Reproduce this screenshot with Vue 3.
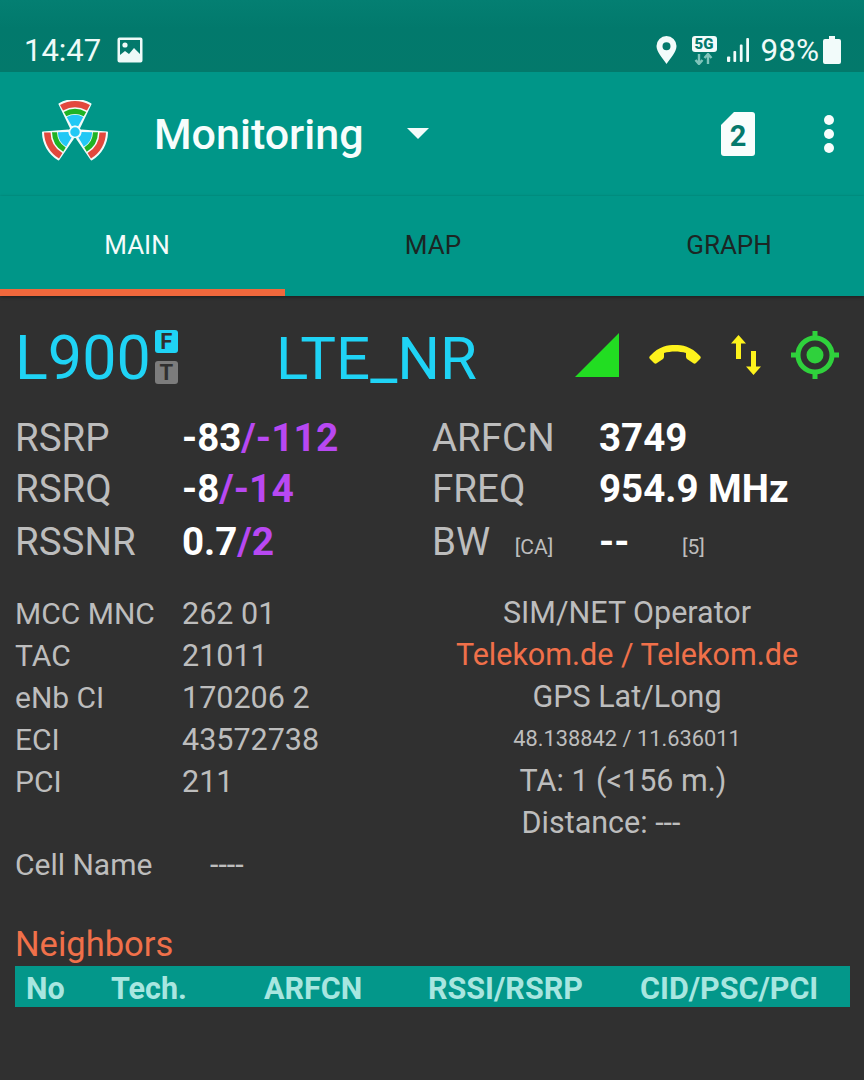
<script setup>
const signalRows = [
  { label: 'RSRP', val: '-83', lim: '/-112', label2: 'ARFCN', val2: '3749' },
  { label: 'RSRQ', val: '-8', lim: '/-14', label2: 'FREQ', val2: '954.9 MHz' },
]
const cellRows = [
  ['MCC MNC', '262 01'],
  ['TAC', '21011'],
  ['eNb CI', '170206 2'],
  ['ECI', '43572738'],
  ['PCI', '211'],
]
const bladeAngles = [0, 120, 240]
</script>

<template>
  <div class="phone">
    <div class="status">
      <div class="st-left">
        <span class="clock">14:47</span>
        <svg class="pic" width="26" height="26" viewBox="0 0 26 26">
          <path fill-rule="evenodd" d="M2.500 0.500h21a2 2 0 0 1 2 2v21a2 2 0 0 1-2 2h-21a2 2 0 0 1-2-2v-21a2 2 0 0 1 2-2zM3 3v15l5-4 4 3 5-6 6 6V3z" fill="#eefaf8" />
          <circle cx="8" cy="8" r="2.600" fill="#eefaf8" />
        </svg>
      </div>
      <div class="st-right">
        <svg width="23" height="28" viewBox="0 0 22 28"><path fill-rule="evenodd" d="M11 0a10 10 0 0 1 10 10c0 6-6 12-10 18C7 22 1 16 1 10A10 10 0 0 1 11 0zm0 6.200a4 4 0 1 0 0 8 4 4 0 0 0 0-8z" fill="#f2fbfa" /></svg>
        <div class="net">
          <span class="net-5g">5G</span>
          <svg width="22" height="12" viewBox="0 0 20 12"><path d="M5 1v9M1.500 7l3.500 4 3.500-4M14 11V2M10.500 5L14 1l3.500 4" fill="none" stroke="#7fc5bb" stroke-width="2.400" /></svg>
        </div>
        <svg class="bars" width="22" height="24" viewBox="0 0 24 26">
          <rect x="0" y="20" width="3.500" height="6" rx="1" fill="#f2fbfa" />
          <rect x="7" y="14" width="3" height="12" rx="1" fill="#f2fbfa" />
          <rect x="14" y="7" width="3" height="19" rx="1" fill="#f2fbfa" />
          <rect x="21" y="0" width="3" height="26" rx="1" fill="#f2fbfa" />
        </svg>
        <span class="pct">98%</span>
        <svg width="18" height="28" viewBox="0 0 18 28"><path d="M6 0h6v3h4a2 2 0 0 1 2 2v21a2 2 0 0 1-2 2H2a2 2 0 0 1-2-2V5a2 2 0 0 1 2-2h4z" fill="#f2fbfa" /></svg>
      </div>
    </div>

    <div class="appbar">
      <svg class="logo" width="68" height="62" viewBox="0 0 68 62">
        <g v-for="a in bladeAngles" :key="a" :transform="`translate(34 32) rotate(${a})`">
          <path d="M-15.500 -28A32 32 0 0 1 15.500 -28L4.500 -5L-4.500 -5z" fill="#f4fbfa" stroke="#f4fbfa" stroke-width="2" stroke-linejoin="round" />
          <path d="M-15 -27.100A31 31 0 0 1 15 -27.100L11.900 -21.400A24.500 24.500 0 0 0 -11.900 -21.400z" fill="#e2483d" />
          <path d="M-11.200 -20.100A23 23 0 0 1 11.200 -20.100L8.700 -15.700A18 18 0 0 0 -8.700 -15.700z" fill="#1fb324" />
          <path d="M-8.300 -15A17 17 0 0 1 8.300 -15L3.200 -5.700A6.500 6.500 0 0 0 -3.200 -5.700z" fill="#22c8f5" />
        </g>
        <circle cx="34" cy="32" r="5.500" fill="#22c8f5" stroke="#f4fbfa" stroke-width="1.500" />
      </svg>
      <span class="title">Monitoring</span>
      <svg class="caret" width="22" height="11" viewBox="0 0 22 11"><path d="M0 0h22L11 11z" fill="#f4fbfa" /></svg>
      <svg class="sim" width="36" height="44" viewBox="0 0 36 44">
        <path d="M14 0h18a3 3 0 0 1 3 3v38a3 3 0 0 1-3 3H4a3 3 0 0 1-3-3V13z" fill="#f8fdfc" />
        <text x="18" y="34" text-anchor="middle" class="sim-num">2</text>
      </svg>
      <div class="dots"><i></i><i></i><i></i></div>
    </div>

    <div class="tabs">
      <div class="tab active">MAIN</div>
      <div class="tab">MAP</div>
      <div class="tab">GRAPH</div>
    </div>

    <div class="body">
      <div class="head">
        <div class="band">
          <span class="band-name">L900</span>
          <div class="badges">
            <b class="bd f">F</b>
            <b class="bd t">T</b>
          </div>
        </div>
        <span class="tech">LTE_NR</span>
        <div class="head-icons">
          <svg width="44" height="44" viewBox="0 0 44 44"><path d="M44 0v44H0z" fill="#22dd22" /></svg>
          <svg width="52" height="20" viewBox="0 0 52 20"><path d="M1 11C10 1 19 0 26 0s16 1 25 11c1 1 1 2 0 3l-4 4c-1 1-2 1-3 0l-6-4c-1-1-1-2-1-3V8c-7-2-15-2-22 0v3c0 1 0 2-1 3l-6 4c-1 1-2 1-3 0l-4-4c-1-1-1-2 0-3z" fill="#fdf21c" /></svg>
          <svg width="30" height="40" viewBox="0 0 30 40"><path d="M7.500 0L15 8.500H10V24H5V8.500H0zM22.500 40L30 31.500H25V16H20V31.500H15z" fill="#fdf21c" /></svg>
          <svg width="48" height="48" viewBox="0 0 48 48">
            <circle cx="24" cy="24" r="17" fill="none" stroke="#2fd13c" stroke-width="5" />
            <circle cx="24" cy="24" r="8.500" fill="#2fd13c" />
            <path d="M24 0v8M24 40v8M0 24h8M40 24h8" stroke="#2fd13c" stroke-width="5" />
          </svg>
        </div>
      </div>

      <div class="signal">
        <div v-for="r in signalRows" :key="r.label" class="s-row">
          <span class="s-label">{{ r.label }}</span>
          <span class="s-val">{{ r.val }}<em>{{ r.lim }}</em></span>
          <span class="s-label">{{ r.label2 }}</span>
          <span class="s-val">{{ r.val2 }}</span>
        </div>
        <div class="s-row last">
          <span class="s-label">RSSNR</span>
          <span class="s-val">0.7<em>/2</em></span>
          <span class="s-label bw">BW <small>[CA]</small></span>
          <span class="s-val bw-val">-- <small>[5]</small></span>
        </div>
      </div>

      <div class="info">
        <div class="cells">
          <div v-for="c in cellRows" :key="c[0]" class="c-row">
            <span class="c-key">{{ c[0] }}</span>
            <span>{{ c[1] }}</span>
          </div>
        </div>
        <div class="oper">
          <div>SIM/NET Operator</div>
          <div class="orange">Telekom.de / Telekom.de</div>
          <div>GPS Lat/Long</div>
          <div class="gps">48.138842 / 11.636011</div>
          <div class="ta">TA: 1 (&lt;156 m.)</div>
          <div class="dist">Distance: ---</div>
        </div>
      </div>

      <div class="cellname">
        <span class="cn-key">Cell Name</span>
        <span>----</span>
      </div>

      <div class="nb-title">Neighbors</div>
      <div class="nb-head">
        <span>No</span>
        <span>Tech.</span>
        <span>ARFCN</span>
        <span>RSSI/RSRP</span>
        <span>CID/PSC/PCI</span>
      </div>
    </div>
  </div>
</template>

<style>
html, body { margin: 0; background: #303030; }
</style>

<style scoped>
.phone { width: 864px; height: 1080px; overflow: hidden; background: #303030; font-family: Roboto, "Liberation Sans", sans-serif; color: #bdbdbd; }

.status { height: 72px; box-sizing: border-box; padding: 28px 23px 0 24px; display: flex; justify-content: space-between; align-items: center; background: linear-gradient(#047f72, #02796c 40%, #03796b); color: #eefaf8; }
.st-left { display: flex; align-items: center; gap: 16px; }
.clock { font-size: 31px; }
.st-right { display: flex; align-items: center; }
.net { display: flex; flex-direction: column; align-items: center; margin-left: 14px; gap: 1px; }
.net-5g { background: #f2fbfa; color: #04796c; font-size: 15px; font-weight: 900; line-height: 16px; padding: 0 3px; border-radius: 3px; }
.bars { margin-left: 10px; }
.pct { font-size: 31.500px; margin: 0 4px 0 12px; }

.appbar { height: 124px; box-sizing: border-box; padding: 0 30px 0 41px; display: flex; align-items: center; background: #009688; color: #f7fdfc; }
.logo { margin-top: -6px; }
.title { font-size: 43px; font-weight: 500; margin-left: 45px; }
.caret { margin-left: 43px; margin-right: auto; margin-top: -1px; }
.sim-num { font: 700 29px Roboto, sans-serif; fill: #04796c; }
.dots { display: flex; flex-direction: column; gap: 4px; margin-left: 68px; }
.dots i { width: 10px; height: 10px; border-radius: 50%; background: #f7fdfc; }

.tabs { height: 100px; display: flex; background: #009688; box-shadow: 0 1px 3px rgba(0,0,0,.4); position: relative; overflow: hidden; }
.tab { flex: 0 0 296px; box-sizing: border-box; padding-top: 34px; text-align: center; font-size: 26px; color: #1c2624; }
.tab:first-child { margin-left: -11px; }
.tab.active { color: #f4fbfa; border-bottom: 7px solid #f0683c; }

.body { padding: 0 14px 0 15px; }
.head { height: 116px; display: flex; align-items: center; }
.band { display: flex; align-items: center; width: 261px; margin-top: 6px; color: #1fd3f5; font-size: 61px; }
.band-name { padding-top: 2px; }
.badges { display: flex; flex-direction: column; gap: 8px; margin-left: 4px; }
.bd { width: 23px; height: 23px; border-radius: 3px; font: 700 22px/23px Roboto, sans-serif; text-align: center; color: #303030; }
.bd.f { background: #1fd3f5; }
.bd.t { background: #7c7c7c; }
.tech { color: #1fd3f5; font-size: 60px; margin-top: 8px; }
.head-icons { display: flex; align-items: center; margin: 2px 11px 0 auto; gap: 30px; }

.s-row { display: grid; grid-template-columns: 167px 250px 167px 1fr; align-items: center; height: 51px; font-size: 38.500px; }
.s-row.last { margin-top: 2px; }
.s-val { color: #fff; font-weight: 700; }
.s-val em { font-style: normal; font-size: 39px; color: #b848f2; }
.s-val small, .s-label small { font-size: 21px; font-weight: 400; color: #bdbdbd; vertical-align: 1px; }
.bw small { margin-left: 15px; }
.bw-val small { margin-left: 43px; }

.info { display: grid; grid-template-columns: 417px 1fr; margin-top: 25px; font-size: 30.500px; }
.c-row { display: grid; grid-template-columns: 167px 1fr; height: 42px; align-items: center; }
.c-key { font-size: 30px; }
.oper { text-align: center; padding-right: 28px; }
.oper > div { height: 42px; line-height: 42px; }
.oper .orange { color: #f0704a; }
.oper .gps { font-size: 21.800px; }
.oper .ta { padding-right: 8px; }
.oper .dist { padding-right: 52px; }
.cellname { height: 42px; line-height: 42px; font-size: 30.500px; display: flex; }
.cn-key { width: 195px; font-size: 30px; }

.nb-title { margin-top: 38px; color: #f0704a; font-size: 34.500px; line-height: 40px; }
.nb-head { margin-top: 2px; height: 41px; box-sizing: border-box; padding: 3px 0 0 11px; display: grid; grid-template-columns: 85px 153px 164px 212px 1fr; align-items: center; background: #03978a; color: #a8e6e0; font-size: 30.500px; font-weight: 700; }
</style>
